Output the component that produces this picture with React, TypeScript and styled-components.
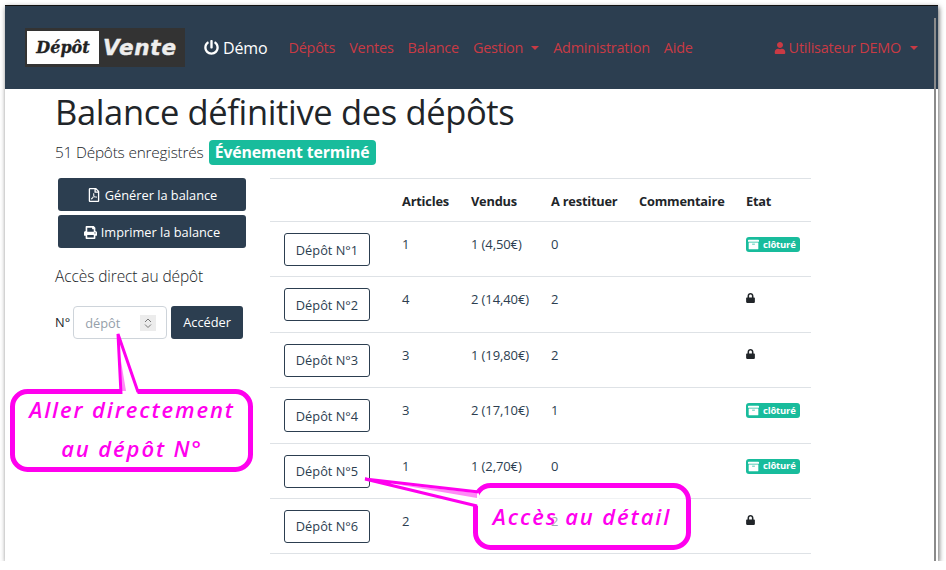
import styled, { createGlobalStyle } from 'styled-components';
import { FaArchive, FaLock, FaPowerOff, FaPrint, FaRegFilePdf, FaUser } from 'react-icons/fa';

const GlobalStyle = createGlobalStyle`
  html, body {
    margin: 0;
    background: #fff;
    font-family: "Open Sans", "Noto Sans", sans-serif;
    color: #212529;
  }
`;

const Window = styled.div`
  position: relative;
  width: 933px;
  height: 556px;
  margin: 5px 0 0 5px;
  background: #fff;
  border-top: 1px solid #111;
  box-shadow: 1px 2px 5px rgba(0, 0, 0, 0.6);
  box-sizing: border-box;
  overflow: hidden;
`;

const ScrollLine = styled.div`
  position: absolute;
  top: 12px;
  right: 2px;
  bottom: 0;
  width: 2px;
  background: #8a8a8a;
`;

const Navbar = styled.nav`
  display: flex;
  align-items: center;
  height: 83px;
  padding: 0 20px;
  background: #2c3e50;
`;

const Logo = styled.div`
  display: flex;
  align-items: center;
  width: 160px;
  height: 39px;
  padding: 0 2px;
  box-sizing: border-box;
  background: #333;
  font-weight: 700;
  font-style: italic;
`;

const LogoBox = styled.span`
  display: flex;
  align-items: center;
  justify-content: center;
  width: 72px;
  height: 33px;
  background: #fff;
  color: #222;
  font-family: "DejaVu Serif", serif;
  font-size: 16px;
  -webkit-text-stroke: 0.3px #222;
`;

const LogoWord = styled.span`
  margin-left: 4px;
  color: #eee;
  font-family: "DejaVu Sans", sans-serif;
  font-size: 21.5px;
  letter-spacing: 0.8px;
  -webkit-text-stroke: 0.4px #eee;
`;

const Brand = styled.div`
  display: flex;
  align-items: center;
  gap: 4px;
  margin: 0 21px 0 19px;
  color: #fff;
  font-size: 16px;
  letter-spacing: -0.15px;
`;

const NavLink = styled.a`
  display: flex;
  align-items: center;
  margin-right: 14px;
  color: #c93a44;
  font-size: 14.4px;
  letter-spacing: -0.2px;
`;

const Caret = styled.span<{ $gap?: number }>`
  width: 0;
  height: 0;
  margin-left: ${p => p.$gap ?? 8}px;
  border-top: 4px solid currentColor;
  border-left: 4px solid transparent;
  border-right: 4px solid transparent;
`;

const UserMenu = styled(NavLink)`
  gap: 3px;
  margin-left: auto;
  margin-right: 0;
`;

const Content = styled.main`
  padding: 0 0 0 50px;
`;

const Title = styled.h1`
  margin: 0;
  font-size: 34.5px;
  line-height: 46px;
  font-weight: 400;
  letter-spacing: -0.35px;
`;

const Subtitle = styled.div`
  display: flex;
  align-items: center;
  gap: 5px;
  height: 26px;
  margin-top: 4px;
  font-size: 15.4px;
  font-weight: 300;
  letter-spacing: -0.2px;
`;

const StatusBadge = styled.span`
  display: inline-flex;
  align-items: center;
  justify-content: center;
  width: 167px;
  height: 25px;
  background: #18bc9c;
  border-radius: 4px;
  color: #fff;
  font-size: 15.8px;
  font-weight: 700;
  letter-spacing: -0.1px;
`;

const Columns = styled.div`
  display: flex;
  margin-top: 13px;
`;

const Sidebar = styled.aside`
  width: 215px;
`;

const ActionButton = styled.button`
  display: flex;
  align-items: center;
  justify-content: center;
  gap: 4px;
  width: 188px;
  height: 33px;
  margin: 0 0 4px 3px;
  padding: 1px 0 0;
  background: #2c3e50;
  border: none;
  border-radius: 3px;
  color: #fff;
  font-family: inherit;
  font-size: 12.8px;
`;

const SideTitle = styled.div`
  margin-top: 18px;
  font-size: 15.5px;
  line-height: 20px;
  font-weight: 300;
  letter-spacing: -0.1px;
`;

const DirectForm = styled.div`
  display: flex;
  align-items: center;
  margin-top: 19px;
  font-size: 12.8px;
`;

const NumberBox = styled.div`
  display: flex;
  align-items: center;
  width: 94px;
  height: 33px;
  margin: 1px 4px 0 3px;
  padding: 0 10px 0 11px;
  box-sizing: border-box;
  border: 1px solid #ced4da;
  border-radius: 4px;
`;

const NumberInput = styled.input`
  flex: 1;
  min-width: 0;
  padding: 0;
  border: none;
  outline: none;
  font-family: inherit;
  font-size: 12.8px;
  &::placeholder {
    color: #95a0aa;
    opacity: 1;
  }
`;

const Spinner = styled.svg`
  width: 16px;
  height: 16px;
  background: #ececec;
`;

const GoButton = styled.button`
  width: 72px;
  height: 33px;
  padding: 0;
  background: #2c3e50;
  border: none;
  border-radius: 3px;
  color: #fff;
  font-family: inherit;
  font-size: 12.8px;
`;

const Table = styled.table`
  width: 541px;
  border-collapse: collapse;
  table-layout: fixed;
  font-size: 13px;
  white-space: nowrap;
  th, td {
    padding: 0 12px;
    text-align: left;
    box-sizing: border-box;
    border-top: 1px solid #dee2e6;
  }
  th {
    height: 43px;
    padding-top: 2px;
    font-size: 12.8px;
    font-weight: 700;
    letter-spacing: -0.2px;
  }
  td {
    height: 55.4px;
    padding-top: 13px;
    vertical-align: top;
    line-height: 18px;
    color: #2c3e50;
    letter-spacing: -0.1px;
  }
  tr:last-child td {
    border-bottom: 1px solid #dee2e6;
  }
`;

const DepotButton = styled.button`
  display: block;
  width: 86px;
  height: 33px;
  margin: -2px 0 0 2px;
  padding: 0;
  background: #fff;
  border: 1px solid #2c3e50;
  border-radius: 3px;
  color: #2c3e50;
  font-family: inherit;
  font-size: 12.8px;
`;

const ClosedBadge = styled.span`
  display: inline-flex;
  align-items: center;
  gap: 4px;
  width: 54px;
  height: 15px;
  margin-top: 2px;
  padding-left: 2px;
  box-sizing: border-box;
  background: #18bc9c;
  border-radius: 3px;
  color: #fff;
  font-size: 9.5px;
  font-weight: 700;
  letter-spacing: -0.2px;
`;

const LockIcon = styled(FaLock)`
  display: block;
  margin-top: 3px;
  width: 9px;
  height: 10px;
  color: #212529;
`;

const Callout = styled.div<{ $x: number; $y: number; $w: number; $h: number }>`
  position: absolute;
  left: ${p => p.$x}px;
  top: ${p => p.$y}px;
  width: ${p => p.$w}px;
  height: ${p => p.$h}px;
`;

const CalloutShape = styled.svg`
  position: absolute;
  left: 0;
  top: 0;
  width: 100%;
  height: 100%;
  overflow: visible;
`;

const CalloutText = styled.div<{ $top: number; $left: number; $w: number; $lh: number }>`
  position: absolute;
  top: ${p => p.$top}px;
  left: ${p => p.$left}px;
  width: ${p => p.$w}px;
  color: #ff00ee;
  font-family: "Open Sans", sans-serif;
  font-style: italic;
  font-weight: 600;
  font-size: 22px;
  line-height: ${p => p.$lh}px;
  letter-spacing: 1.9px;
  text-align: center;
  white-space: nowrap;
`;

const rows = [
  { id: 1, articles: 1, sold: '1 (4,50€)', back: 0, closed: true },
  { id: 2, articles: 4, sold: '2 (14,40€)', back: 2, closed: false },
  { id: 3, articles: 3, sold: '1 (19,80€)', back: 2, closed: false },
  { id: 4, articles: 3, sold: '2 (17,10€)', back: 1, closed: true },
  { id: 5, articles: 1, sold: '1 (2,70€)', back: 0, closed: true },
  { id: 6, articles: 2, sold: '', back: 2, closed: false },
];

export default function App() {
  return (
    <>
      <GlobalStyle />
      <Window>
        <Navbar>
          <Logo>
            <LogoBox>Dépôt</LogoBox>
            <LogoWord>Vente</LogoWord>
          </Logo>
          <Brand>
            <FaPowerOff size={15} /> Démo
          </Brand>
          <NavLink>Dépôts</NavLink>
          <NavLink>Ventes</NavLink>
          <NavLink>Balance</NavLink>
          <NavLink>
            Gestion <Caret />
          </NavLink>
          <NavLink>Administration</NavLink>
          <NavLink>Aide</NavLink>
          <UserMenu>
            <FaUser size={12} /> Utilisateur DEMO <Caret $gap={6} />
          </UserMenu>
        </Navbar>
        <Content>
          <Title>Balance définitive des dépôts</Title>
          <Subtitle>
            51 Dépôts enregistrés <StatusBadge>Événement terminé</StatusBadge>
          </Subtitle>
          <Columns>
            <Sidebar>
              <ActionButton>
                <FaRegFilePdf size={14} /> Générer la balance
              </ActionButton>
              <ActionButton>
                <FaPrint size={13} /> Imprimer la balance
              </ActionButton>
              <SideTitle>Accès direct au dépôt</SideTitle>
              <DirectForm>
                N°
                <NumberBox>
                  <NumberInput placeholder="dépôt" />
                  <Spinner viewBox="0 0 16 16" fill="none" stroke="#777" strokeWidth="1">
                    <path d="M5 7l3-3 3 3M5 9.5l3 3 3-3" />
                  </Spinner>
                </NumberBox>
                <GoButton>Accéder</GoButton>
              </DirectForm>
            </Sidebar>
            <Table>
              <colgroup>
                <col width={120} />
                <col width={69} />
                <col width={80} />
                <col width={88} />
                <col width={107} />
                <col width={77} />
              </colgroup>
              <thead>
                <tr>
                  <th></th>
                  <th>Articles</th>
                  <th>Vendus</th>
                  <th>A restituer</th>
                  <th>Commentaire</th>
                  <th>Etat</th>
                </tr>
              </thead>
              <tbody>
                {rows.map(r => (
                  <tr key={r.id}>
                    <td>
                      <DepotButton>Dépôt N°{r.id}</DepotButton>
                    </td>
                    <td>{r.articles}</td>
                    <td>{r.sold}</td>
                    <td>{r.back}</td>
                    <td></td>
                    <td>
                      {r.closed ? (
                        <ClosedBadge>
                          <FaArchive size={11} /> clôturé
                        </ClosedBadge>
                      ) : (
                        <LockIcon />
                      )}
                    </td>
                  </tr>
                ))}
              </tbody>
            </Table>
          </Columns>
        </Content>
        <ScrollLine />
        <Callout $x={7} $y={327} $w={240} $h={139}>
          <CalloutShape viewBox="0 0 240 139">
            <rect x="0.5" y="58.5" width="238" height="78" rx="15" fill="#fff" stroke="#ff00ee" strokeWidth="5" />
            <path d="M106 1 L109 62 H126 Z" fill="#fff" />
            <path d="M108 22 L109 58 L114 58 Z" fill="#ff8cf6" />
            <path d="M109 61 L106 1 L126 59" fill="none" stroke="#ff00ee" strokeWidth="3" />
          </CalloutShape>
          <CalloutText $top={57} $left={0} $w={240} $lh={39}>
            Aller directement
            <br />
            au dépôt N°
          </CalloutText>
        </Callout>
        <Callout $x={360} $y={473} $w={330} $h={72}>
          <CalloutShape viewBox="0 0 330 72">
            <rect x="110.5" y="6.5" width="213" height="62" rx="15" fill="#fff" fillOpacity="0.55" stroke="#ff00ee" strokeWidth="5" />
            <path d="M0 0 L114 12 L114 27 Z" fill="#fff" />
            <path d="M30 5 L112 14 L112 19 Z" fill="#ff8cf6" />
            <path d="M114 13 L0 0 L112 27" fill="none" stroke="#ff00ee" strokeWidth="3" />
          </CalloutShape>
          <CalloutText $top={19} $left={110} $w={214} $lh={36}>
            Accès au détail
          </CalloutText>
        </Callout>
      </Window>
    </>
  );
}
